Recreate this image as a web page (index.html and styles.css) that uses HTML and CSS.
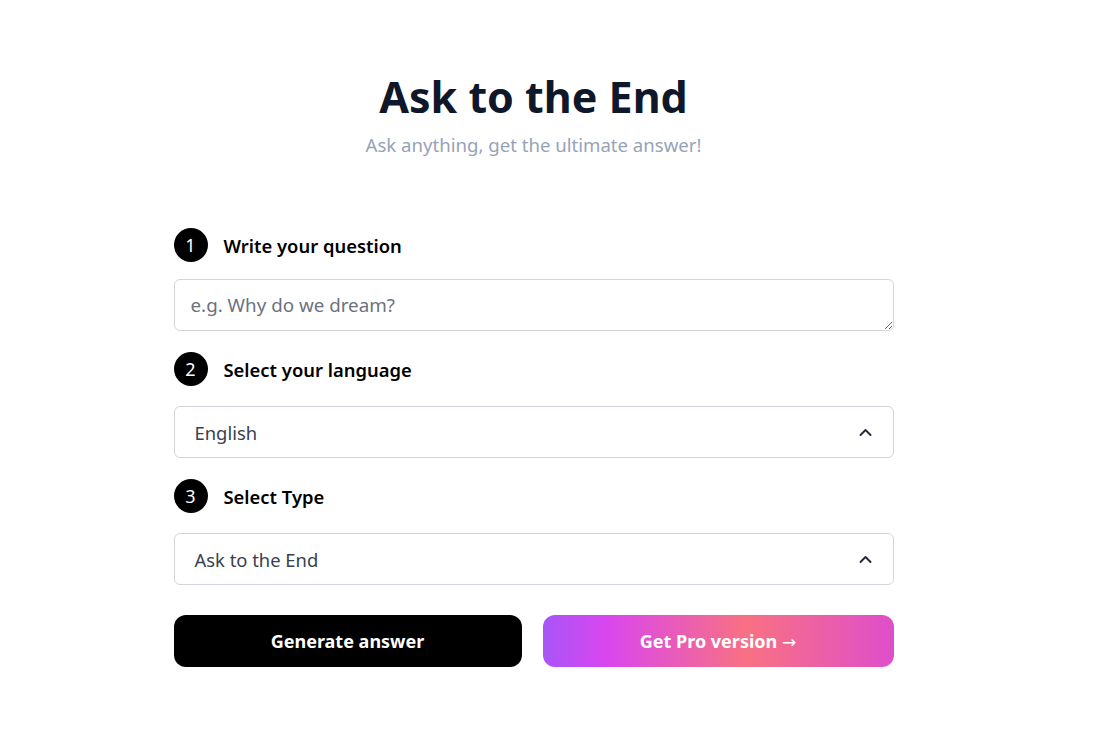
FILE: index.html
```html
<!DOCTYPE html>
<html>
	<head>
		<meta charset="utf-8" />
		<title>Ask to the End</title>
		<link rel="stylesheet" href="styles.css">
	</head>
	<body>
		<main class="page">
			<header class="hero">
				<h1>Ask to the End</h1>
				<p>Ask anything, get the ultimate answer!</p>
			</header>
			<form class="form">
				<div class="step">
					<span class="badge">1</span>
					<label for="question">Write your question</label>
				</div>
				<textarea id="question" rows="1" placeholder="e.g. Why do we dream?"></textarea>

				<div class="step step-gap">
					<span class="badge">2</span>
					<label>Select your language</label>
				</div>
				<div class="select">
					<span>English</span>
					<svg width="15" height="15" viewBox="0 0 24 24" fill="none" stroke="#1f2937" stroke-width="3" stroke-linecap="round" stroke-linejoin="round"><path d="M4 16l8-8 8 8" /></svg>
				</div>

				<div class="step step-gap">
					<span class="badge">3</span>
					<label>Select Type</label>
				</div>
				<div class="select">
					<span>Ask to the End</span>
					<svg width="15" height="15" viewBox="0 0 24 24" fill="none" stroke="#1f2937" stroke-width="3" stroke-linecap="round" stroke-linejoin="round"><path d="M4 16l8-8 8 8" /></svg>
				</div>

				<div class="actions">
					<button type="button" class="btn btn-dark">Generate answer</button>
					<button type="button" class="btn btn-pro">Get Pro version <span class="arrow">→</span></button>
				</div>
			</form>
		</main>
	</body>
</html>
```

FILE: styles.css
```css
body {
	margin: 0;
	background: #fff;
	font-family: 'Noto Sans', 'Open Sans', sans-serif;
}
.page {
	width: 1067px;
	padding-top: 69px;
}
.hero {
	text-align: center;
}
.hero h1 {
	margin: 0;
	font-size: 43px;
	line-height: 56px;
	font-weight: 700;
	color: #0f172a;
}
.hero p {
	margin: 7px 0 0;
	font-size: 18.6px;
	line-height: 26px;
	color: #94a3b8;
}
.form {
	width: 720px;
	margin: 70px auto 0;
	display: flex;
	flex-direction: column;
}
.step {
	display: flex;
	align-items: center;
	gap: 16px;
	height: 34px;
	margin-bottom: 17px;
}
.step-gap {
	margin-top: 21px;
	margin-bottom: 20px;
}
.badge {
	width: 34px;
	height: 34px;
	border-radius: 50%;
	background: #000;
	color: #fff;
	font-size: 18px;
	display: flex;
	align-items: center;
	justify-content: center;
}
.step label {
	font-size: 18.4px;
	font-weight: 600;
	color: #000;
}
textarea {
	box-sizing: border-box;
	width: 100%;
	height: 52px;
	padding: 12px 16px;
	border: 1px solid #d1d5db;
	border-radius: 6px;
	font-family: inherit;
	font-size: 18.8px;
	line-height: 26px;
	color: #111827;
	outline: none;
}
textarea::placeholder {
	color: #6b7280;
}
.select {
	box-sizing: border-box;
	height: 52px;
	padding: 0 20px;
	border: 1px solid #d1d5db;
	border-radius: 6px;
	display: flex;
	align-items: center;
	justify-content: space-between;
	font-size: 18.4px;
	color: #374151;
}
.actions {
	display: grid;
	grid-template-columns: 348px 351px;
	gap: 21px;
	margin-top: 30px;
}
.btn {
	height: 52px;
	border: 0;
	border-radius: 12px;
	font-family: inherit;
	font-size: 18px;
	font-weight: 700;
	color: #fff;
}
.btn-dark {
	background: #000;
}
.btn-pro {
	background: linear-gradient(90deg, #a855f7 0%, #d946ef 18%, #f87182 58%, #df4ecb 100%);
}
.arrow {
	font-family: 'DejaVu Sans', sans-serif;
	font-weight: 400;
	font-size: 17px;
}
```
